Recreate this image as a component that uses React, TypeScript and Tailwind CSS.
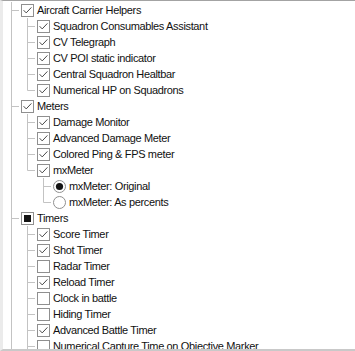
import React from "react";

type Kind = "check" | "radio";
type State = "on" | "off" | "mixed";

interface Node {
  label: string;
  kind?: Kind;
  state: State;
  children?: Node[];
  last?: boolean;
}

// visible slice of a scrolled tree; root-level siblings continue below
const TREE: Node[] = [
  {
    label: "Aircraft Carrier Helpers", state: "on",
    children: [
      { label: "Squadron Consumables Assistant", state: "on" },
      { label: "CV Telegraph", state: "on" },
      { label: "CV POI static indicator", state: "on" },
      { label: "Central Squadron Healtbar", state: "on" },
      { label: "Numerical HP on Squadrons", state: "on" },
    ],
  },
  {
    label: "Meters", state: "on",
    children: [
      { label: "Damage Monitor", state: "on" },
      { label: "Advanced Damage Meter", state: "on" },
      { label: "Colored Ping & FPS meter", state: "on" },
      {
        label: "mxMeter", state: "on",
        children: [
          { label: "mxMeter: Original", kind: "radio", state: "on" },
          { label: "mxMeter: As percents", kind: "radio", state: "off" },
        ],
      },
    ],
  },
  {
    label: "Timers", state: "mixed",
    children: [
      { label: "Score Timer", state: "on" },
      { label: "Shot Timer", state: "on" },
      { label: "Radar Timer", state: "off" },
      { label: "Reload Timer", state: "on" },
      { label: "Clock in battle", state: "off" },
      { label: "Hiding Timer", state: "off" },
      { label: "Advanced Battle Timer", state: "on" },
      { label: "Numerical Capture Time on Objective Marker", state: "off", last: false },
    ],
  },
];

const LINE = "#c3c3c3";

type Cell = "pipe" | "tee" | "elbow" | "blank";

function IndentCell({ type }: { type: Cell }) {
  return (
    <svg width="16" height="16" viewBox="0 0 16 16" className="shrink-0">
      {(type === "pipe" || type === "tee") && <line x1="8.5" y1="0" x2="8.5" y2="16" stroke={LINE} />}
      {type === "elbow" && <line x1="8.5" y1="0" x2="8.5" y2="8.5" stroke={LINE} />}
      {(type === "tee" || type === "elbow") && <line x1="8.5" y1="8.5" x2="16" y2="8.5" stroke={LINE} />}
    </svg>
  );
}

function CheckBox({ state }: { state: State }) {
  return (
    <svg width="13" height="13" viewBox="0 0 13 13" className="shrink-0">
      <rect x="0.5" y="0.5" width="12" height="12" fill="white" stroke="#8f8f8f" />
      {state === "on" && (
        <polyline points="2.6,6.2 5.2,8.9 10.4,3.4" fill="none" stroke="#4a4a4a" strokeWidth="1" />
      )}
      {state === "mixed" && <rect x="3" y="3" width="7" height="7" fill="#141414" />}
    </svg>
  );
}

function Radio({ state }: { state: State }) {
  return (
    <svg width="13" height="13" viewBox="0 0 13 13" className="shrink-0">
      <circle cx="6.5" cy="6.5" r="6" fill="white" stroke="#8f8f8f" />
      {state === "on" && <circle cx="6.5" cy="6.5" r="3.6" fill="#141414" />}
    </svg>
  );
}

interface Row { node: Node; cells: Cell[] }

function flatten(nodes: Node[], prefix: boolean[], rootOpen: boolean): Row[] {
  const rows: Row[] = [];
  nodes.forEach((n, i) => {
    const isLast = prefix.length === 0 ? !rootOpen && i === nodes.length - 1 : n.last ?? i === nodes.length - 1;
    const cells: Cell[] = [...prefix.map(p => (p ? "pipe" : "blank") as Cell), isLast ? "elbow" : "tee"];
    rows.push({ node: n, cells });
    if (n.children) rows.push(...flatten(n.children, [...prefix, !isLast], rootOpen));
  });
  return rows;
}

export default function App() {
  const rows = flatten(TREE, [], true);
  return (
    <div className="w-[355px] h-[351px] overflow-hidden bg-white border-t border-t-[#a3a3a3] border-b-2 border-b-[#c9c9c9] border-l-[3px] border-l-[#ebebeb]">
      <div className="pt-px" style={{ fontFamily: '"Liberation Sans", Arial, sans-serif' }}>
        {rows.map((r, idx) => (
          <div key={idx} className="flex h-4 items-center text-[11px] leading-4 tracking-[-0.35px] text-[#111] whitespace-nowrap">
            {r.cells.map((c, j) => <IndentCell key={j} type={c} />)}
            <span className="ml-[2px] flex items-center">
              {r.node.kind === "radio" ? <Radio state={r.node.state} /> : <CheckBox state={r.node.state} />}
            </span>
            <span className="ml-[3px]">{r.node.label}</span>
          </div>
        ))}
      </div>
    </div>
  );
}
